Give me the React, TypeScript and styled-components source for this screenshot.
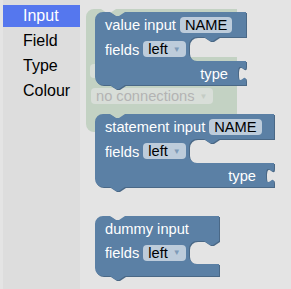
import React from "react";
import styled, { createGlobalStyle } from "styled-components";

const BLUE = "#5b80a5";
const BLUE_DARK = "#4a6886";
const GHOST = "#c3d2c3";

const GlobalStyle = createGlobalStyle`
  html, body {
    margin: 0;
    padding: 0;
    background: #e4e4e4;
  }
  body {
    font-family: "Liberation Sans", Arial, sans-serif;
  }
`;

const Page = styled.div`
  display: flex;
  width: 291px;
  height: 289px;
  padding-left: 3px;
  box-sizing: border-box;
  overflow: hidden;
`;

const Toolbox = styled.div`
  width: 77px;
  flex-shrink: 0;
  background: #ddd;
  padding-top: 5px;
`;

const Category = styled.div<{ $selected?: boolean }>`
  height: 22px;
  margin-bottom: 3px;
  padding-left: 20px;
  display: flex;
  align-items: center;
  font-size: 16px;
  color: ${(p) => (p.$selected ? "#fff" : "#000")};
  background: ${(p) => (p.$selected ? "#57e" : "transparent")};
`;

const Flyout = styled.div`
  position: relative;
  flex: 1;
  background: #e4e4e4;
  padding: 12px 0 0 15px;
  display: flex;
  flex-direction: column;
  align-items: flex-start;
  gap: 29px;
`;

const BlockWrap = styled.div<{ $w: number; $h: number }>`
  position: relative;
  flex-shrink: 0;
  width: ${(p) => p.$w}px;
  height: ${(p) => p.$h}px;
`;

const Ghost = styled(BlockWrap)`
  position: absolute;
  left: 6px;
  top: 9px;
  padding: 55px 0 0 4px;
  box-sizing: border-box;
`;

const Shape = styled.svg`
  position: absolute;
  left: 0;
  top: 0;
  overflow: visible;
`;

const Rows = styled.div`
  position: relative;
  display: flex;
  flex-direction: column;
`;

const Row = styled.div<{ $h: number; $right?: boolean }>`
  height: ${(p) => p.$h}px;
  display: flex;
  align-items: center;
  gap: 4px;
  padding: ${(p) => (p.$right ? "0 18px 0 0" : "0 0 0 10px")};
  justify-content: ${(p) => (p.$right ? "flex-end" : "flex-start")};
`;

const Label = styled.span`
  color: #fff;
  font-size: 14.67px;
  line-height: 1;
  padding-top: 2px;
  white-space: nowrap;
`;

const Field = styled.span<{ $ghost?: boolean }>`
  height: 16px;
  padding: 1px 5px 0;
  box-sizing: border-box;
  border-radius: 4px;
  display: inline-flex;
  align-items: center;
  font-size: 14.67px;
  line-height: 1;
  white-space: nowrap;
  color: ${(p) => (p.$ghost ? "#b3b3b3" : "#000")};
  background: ${(p) => (p.$ghost ? "#d8ded8" : "rgba(255, 255, 255, 0.6)")};
`;

const Arrow = styled.span<{ $ghost?: boolean }>`
  margin-left: 5px;
  font-size: 8px;
  color: ${(p) => (p.$ghost ? "#c4ccc4" : "#7e9bb8")};
`;

const GhostStub = styled(Field)`
  display: flex;
  width: 20px;
  height: 14px;
  margin-bottom: 10px;
`;

const GhostRow = styled.div`
  display: flex;
  padding-left: 1px;
`;

type Geometry = {
  w: number;
  top: number;
  sx: number;
  sh: number;
  bottom: number;
  tab: boolean;
};

function blockPath({ w, top, sx, sh, bottom, tab }: Geometry) {
  const y2 = top + sh;
  const y3 = y2 + bottom;
  let d = `M0,8 A8,8 0 0,1 8,0 H15 l6,4 3,0 6,-4 H${w} V${top}`;
  d += ` H${sx + 30} l-6,4 -3,0 -6,-4 h-7 a8,8 0 0,0 -8,8 V${y2 - 8} a8,8 0 0,0 8,8 H${w}`;
  if (tab) d += " v5 c0,10 -8,-8 -8,7.5 s8,-2.5 8,7.5";
  d += ` V${y3} H30 l-6,4 -3,0 -6,-4 H8 A8,8 0 0,1 0,${y3 - 8} Z`;
  return d;
}

function Block({
  geo,
  children,
}: {
  geo: Geometry;
  children: React.ReactNode;
}) {
  const h = geo.top + geo.sh + geo.bottom;
  const d = blockPath(geo);
  return (
    <BlockWrap $w={geo.w} $h={h}>
      <Shape width={geo.w} height={h}>
        <path d={d} fill={BLUE_DARK} transform="translate(1,1)" />
        <path d={d} fill={BLUE} />
      </Shape>
      <Rows>{children}</Rows>
    </BlockWrap>
  );
}

function Dropdown({ value, ghost }: { value: string; ghost?: boolean }) {
  return (
    <Field $ghost={ghost}>
      {value}
      <Arrow $ghost={ghost}>▼</Arrow>
    </Field>
  );
}

const ghostGeo: Geometry = { w: 151, top: 25, sx: 14, sh: 23, bottom: 75, tab: false };

export default function App() {
  const categories = ["Input", "Field", "Type", "Colour"];
  return (
    <>
      <GlobalStyle />
      <Page>
        <Toolbox>
          {categories.map((c, i) => (
            <Category key={c} $selected={i === 0}>
              {c}
            </Category>
          ))}
        </Toolbox>
        <Flyout>
          <Ghost $w={151} $h={123}>
            <Shape width={151} height={123}>
              <path d={blockPath(ghostGeo)} fill={GHOST} />
            </Shape>
            <Rows>
              <GhostStub $ghost />
              <GhostRow>
                <Dropdown value="no connections" ghost />
              </GhostRow>
            </Rows>
          </Ghost>

          <Block geo={{ w: 151, top: 25, sx: 94, sh: 24, bottom: 24, tab: true }}>
            <Row $h={25}>
              <Label>value input</Label>
              <Field>NAME</Field>
            </Row>
            <Row $h={24}>
              <Label>fields</Label>
              <Dropdown value="left" />
            </Row>
            <Row $h={24} $right>
              <Label>type</Label>
            </Row>
          </Block>

          <Block geo={{ w: 179, top: 25, sx: 94, sh: 24, bottom: 24, tab: true }}>
            <Row $h={25}>
              <Label>statement input</Label>
              <Field>NAME</Field>
            </Row>
            <Row $h={24}>
              <Label>fields</Label>
              <Dropdown value="left" />
            </Row>
            <Row $h={24} $right>
              <Label>type</Label>
            </Row>
          </Block>

          <Block geo={{ w: 124, top: 25, sx: 94, sh: 23, bottom: 12, tab: false }}>
            <Row $h={25}>
              <Label>dummy input</Label>
            </Row>
            <Row $h={23}>
              <Label>fields</Label>
              <Dropdown value="left" />
            </Row>
          </Block>
        </Flyout>
      </Page>
    </>
  );
}
